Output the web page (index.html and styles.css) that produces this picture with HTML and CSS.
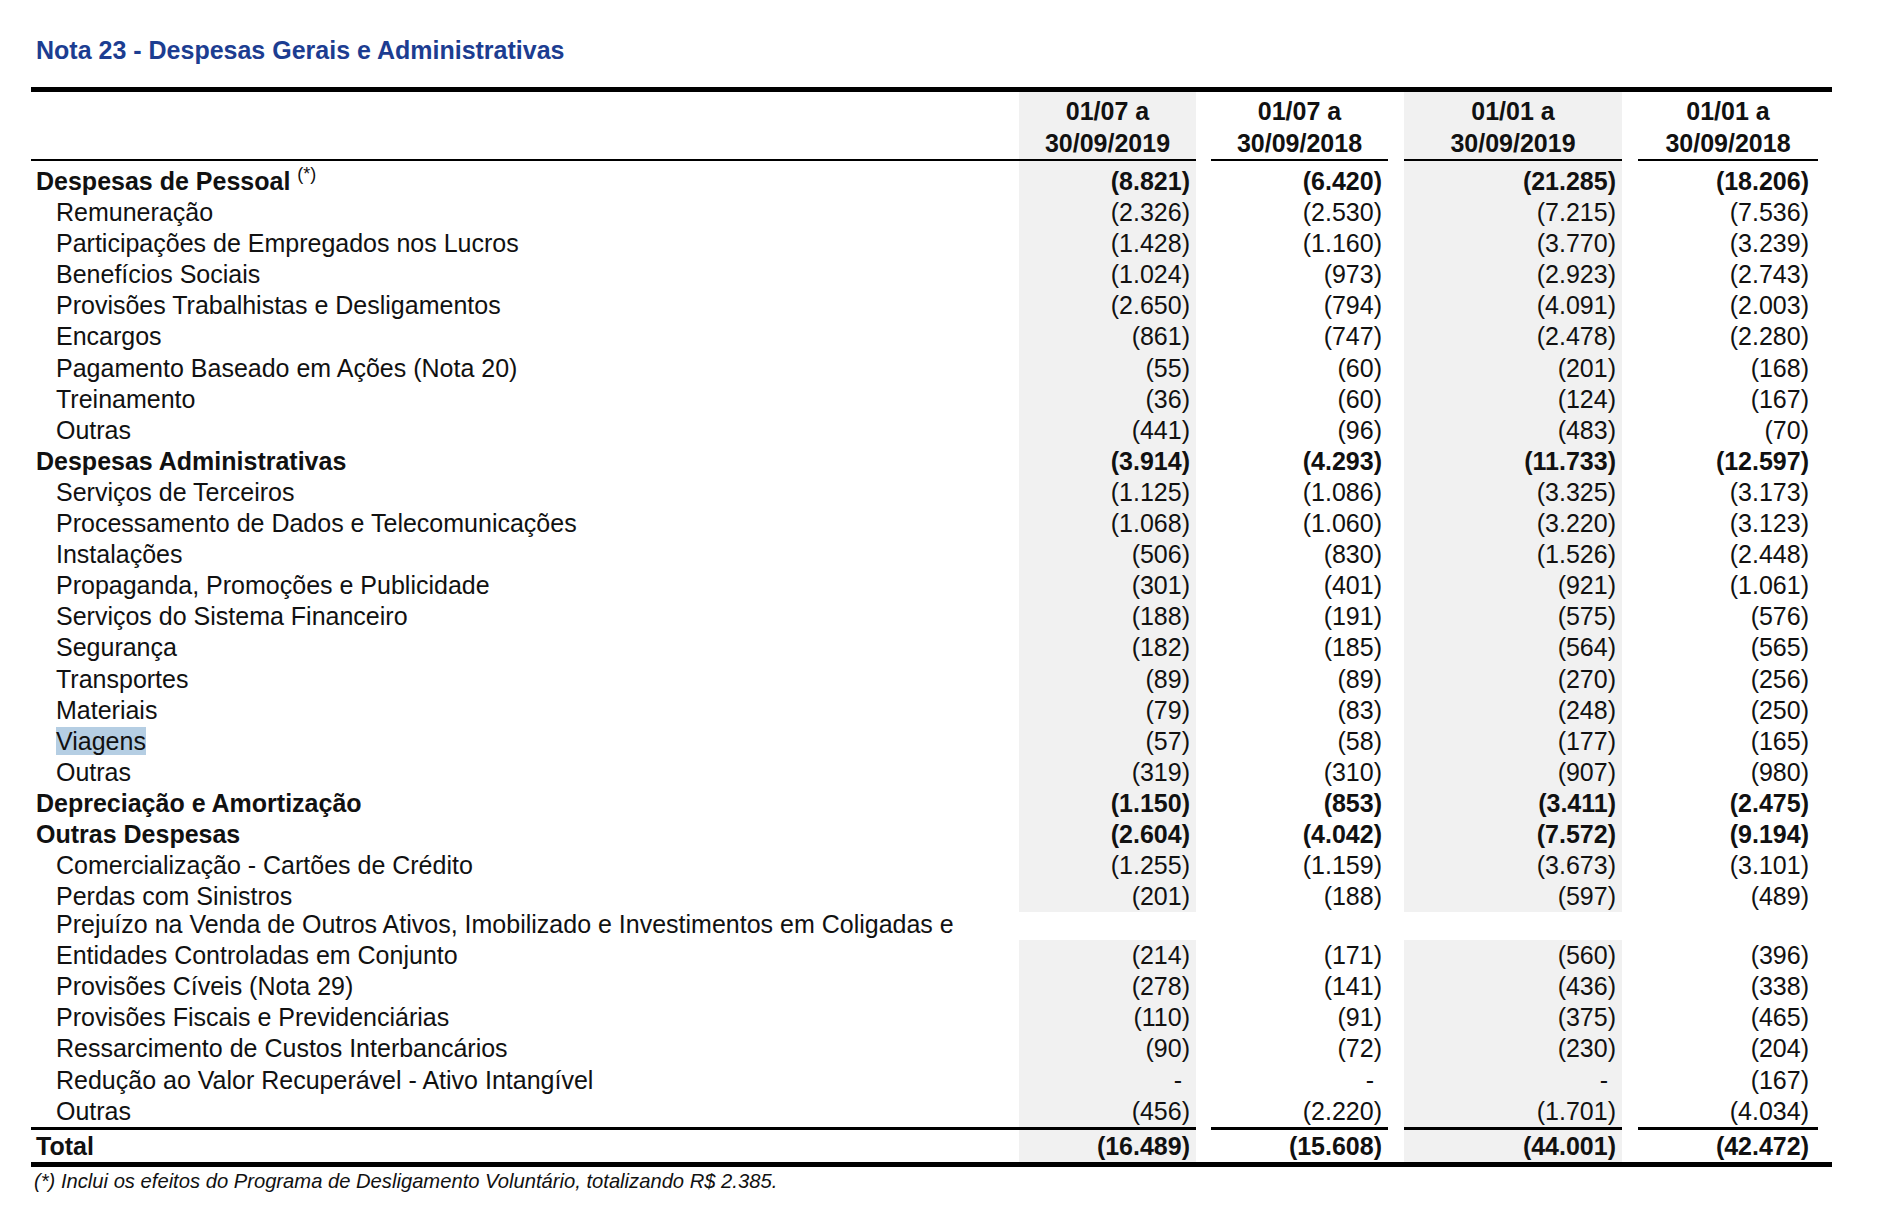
FILE: index.html
```html
<!DOCTYPE html>
<html lang="pt-BR">
<head>
<meta charset="utf-8">
<title>Nota 23 - Despesas Gerais e Administrativas</title>
<link rel="stylesheet" href="styles.css">
</head>
<body>
<div class="page">
  <h1 class="title">Nota 23 - Despesas Gerais e Administrativas</h1>
  <div class="table">
    <div class="row head">
      <div class="lbl"></div>
      <div class="hc sh">01/07 a<br>30/09/2019</div>
      <div class="hc g15">01/07 a<br>30/09/2018</div>
      <div class="hc g16 sh">01/01 a<br>30/09/2019</div>
      <div class="hc g16">01/01 a<br>30/09/2018</div>
    </div>
    <div class="body">
      <div class="row b"><div class="lbl">Despesas de Pessoal <sup class="note">(*)</sup></div><div class="n sh">(8.821)</div><div class="n g15">(6.420)</div><div class="n g16 sh">(21.285)</div><div class="n g16 last">(18.206)</div></div>
      <div class="row"><div class="lbl sub">Remuneração</div><div class="n sh">(2.326)</div><div class="n g15">(2.530)</div><div class="n g16 sh">(7.215)</div><div class="n g16 last">(7.536)</div></div>
      <div class="row"><div class="lbl sub">Participações de Empregados nos Lucros</div><div class="n sh">(1.428)</div><div class="n g15">(1.160)</div><div class="n g16 sh">(3.770)</div><div class="n g16 last">(3.239)</div></div>
      <div class="row"><div class="lbl sub">Benefícios Sociais</div><div class="n sh">(1.024)</div><div class="n g15">(973)</div><div class="n g16 sh">(2.923)</div><div class="n g16 last">(2.743)</div></div>
      <div class="row"><div class="lbl sub">Provisões Trabalhistas e Desligamentos</div><div class="n sh">(2.650)</div><div class="n g15">(794)</div><div class="n g16 sh">(4.091)</div><div class="n g16 last">(2.003)</div></div>
      <div class="row"><div class="lbl sub">Encargos</div><div class="n sh">(861)</div><div class="n g15">(747)</div><div class="n g16 sh">(2.478)</div><div class="n g16 last">(2.280)</div></div>
      <div class="row"><div class="lbl sub">Pagamento Baseado em Ações (Nota 20)</div><div class="n sh">(55)</div><div class="n g15">(60)</div><div class="n g16 sh">(201)</div><div class="n g16 last">(168)</div></div>
      <div class="row"><div class="lbl sub">Treinamento</div><div class="n sh">(36)</div><div class="n g15">(60)</div><div class="n g16 sh">(124)</div><div class="n g16 last">(167)</div></div>
      <div class="row"><div class="lbl sub">Outras</div><div class="n sh">(441)</div><div class="n g15">(96)</div><div class="n g16 sh">(483)</div><div class="n g16 last">(70)</div></div>
      <div class="row b"><div class="lbl">Despesas Administrativas</div><div class="n sh">(3.914)</div><div class="n g15">(4.293)</div><div class="n g16 sh">(11.733)</div><div class="n g16 last">(12.597)</div></div>
      <div class="row"><div class="lbl sub">Serviços de Terceiros</div><div class="n sh">(1.125)</div><div class="n g15">(1.086)</div><div class="n g16 sh">(3.325)</div><div class="n g16 last">(3.173)</div></div>
      <div class="row"><div class="lbl sub">Processamento de Dados e Telecomunicações</div><div class="n sh">(1.068)</div><div class="n g15">(1.060)</div><div class="n g16 sh">(3.220)</div><div class="n g16 last">(3.123)</div></div>
      <div class="row"><div class="lbl sub">Instalações</div><div class="n sh">(506)</div><div class="n g15">(830)</div><div class="n g16 sh">(1.526)</div><div class="n g16 last">(2.448)</div></div>
      <div class="row"><div class="lbl sub">Propaganda, Promoções e Publicidade</div><div class="n sh">(301)</div><div class="n g15">(401)</div><div class="n g16 sh">(921)</div><div class="n g16 last">(1.061)</div></div>
      <div class="row"><div class="lbl sub">Serviços do Sistema Financeiro</div><div class="n sh">(188)</div><div class="n g15">(191)</div><div class="n g16 sh">(575)</div><div class="n g16 last">(576)</div></div>
      <div class="row"><div class="lbl sub">Segurança</div><div class="n sh">(182)</div><div class="n g15">(185)</div><div class="n g16 sh">(564)</div><div class="n g16 last">(565)</div></div>
      <div class="row"><div class="lbl sub">Transportes</div><div class="n sh">(89)</div><div class="n g15">(89)</div><div class="n g16 sh">(270)</div><div class="n g16 last">(256)</div></div>
      <div class="row"><div class="lbl sub">Materiais</div><div class="n sh">(79)</div><div class="n g15">(83)</div><div class="n g16 sh">(248)</div><div class="n g16 last">(250)</div></div>
      <div class="row"><div class="lbl sub"><span class="selected">Viagens</span></div><div class="n sh">(57)</div><div class="n g15">(58)</div><div class="n g16 sh">(177)</div><div class="n g16 last">(165)</div></div>
      <div class="row"><div class="lbl sub">Outras</div><div class="n sh">(319)</div><div class="n g15">(310)</div><div class="n g16 sh">(907)</div><div class="n g16 last">(980)</div></div>
      <div class="row b"><div class="lbl">Depreciação e Amortização</div><div class="n sh">(1.150)</div><div class="n g15">(853)</div><div class="n g16 sh">(3.411)</div><div class="n g16 last">(2.475)</div></div>
      <div class="row b"><div class="lbl">Outras Despesas</div><div class="n sh">(2.604)</div><div class="n g15">(4.042)</div><div class="n g16 sh">(7.572)</div><div class="n g16 last">(9.194)</div></div>
      <div class="row"><div class="lbl sub">Comercialização - Cartões de Crédito</div><div class="n sh">(1.255)</div><div class="n g15">(1.159)</div><div class="n g16 sh">(3.673)</div><div class="n g16 last">(3.101)</div></div>
      <div class="row"><div class="lbl sub">Perdas com Sinistros</div><div class="n sh">(201)</div><div class="n g15">(188)</div><div class="n g16 sh">(597)</div><div class="n g16 last">(489)</div></div>
      <div class="row two"><div class="lbl sub"><span class="l1">Prejuízo na Venda de Outros Ativos, Imobilizado e Investimentos em Coligadas e</span><span class="l2">Entidades Controladas em Conjunto</span></div><div class="n sh">(214)</div><div class="n g15">(171)</div><div class="n g16 sh">(560)</div><div class="n g16 last">(396)</div></div>
      <div class="row"><div class="lbl sub">Provisões Cíveis (Nota 29)</div><div class="n sh">(278)</div><div class="n g15">(141)</div><div class="n g16 sh">(436)</div><div class="n g16 last">(338)</div></div>
      <div class="row"><div class="lbl sub">Provisões Fiscais e Previdenciárias</div><div class="n sh">(110)</div><div class="n g15">(91)</div><div class="n g16 sh">(375)</div><div class="n g16 last">(465)</div></div>
      <div class="row"><div class="lbl sub">Ressarcimento de Custos Interbancários</div><div class="n sh">(90)</div><div class="n g15">(72)</div><div class="n g16 sh">(230)</div><div class="n g16 last">(204)</div></div>
      <div class="row"><div class="lbl sub">Redução ao Valor Recuperável - Ativo Intangível</div><div class="n sh"><span class="dash">-</span></div><div class="n g15"><span class="dash">-</span></div><div class="n g16 sh"><span class="dash">-</span></div><div class="n g16 last">(167)</div></div>
      <div class="row end"><div class="lbl sub">Outras</div><div class="n sh">(456)</div><div class="n g15">(2.220)</div><div class="n g16 sh">(1.701)</div><div class="n g16 last">(4.034)</div></div>
      <div class="row b total"><div class="lbl">Total</div><div class="n sh">(16.489)</div><div class="n g15">(15.608)</div><div class="n g16 sh">(44.001)</div><div class="n g16 last">(42.472)</div></div>
    </div>
  </div>
  <p class="footnote">(*) Inclui os efeitos do Programa de Desligamento Voluntário, totalizando R$ 2.385.</p>
</div>
</body>
</html>
```

FILE: styles.css
```css
* { box-sizing: border-box; }

html, body {
  margin: 0;
  padding: 0;
  background: #ffffff;
}

body {
  font-family: "Liberation Sans", Arial, Helvetica, sans-serif;
  color: #111111;
}

.page {
  padding: 35px 0 0 31px;
  width: 1832px;
}

.title {
  margin: 0 0 22px 5px;
  font-size: 25px;
  line-height: 30px;
  font-weight: bold;
  color: #1c3d91;
}

.table {
  width: 1801px;
  border-top: 5px solid #000;
  border-bottom: 5px solid #000;
  font-size: 25px;
}

.row {
  display: grid;
  grid-template-columns: 988px 177px 192px 234px 196px;
  line-height: 31.1px;
}

.sh { background: #f1f1f1; }
.g15 { margin-left: 15px; }
.g16 { margin-left: 16px; }

.head {
  font-weight: bold;
}

.head > div {
  padding-top: 3px;
  border-bottom: 2px solid #000;
  line-height: 32px;
}

.hc { text-align: center; }

.body > .row:first-child > div { padding-top: 5px; }

.lbl { padding-left: 5px; white-space: nowrap; }
.lbl.sub { padding-left: 25px; }

.n {
  text-align: right;
  padding-right: 6px;
}
.n.last { padding-right: 9px; }

.b { font-weight: bold; }

.note {
  font-size: 18px;
  font-weight: normal;
  vertical-align: 0;
  position: relative;
  top: -10px;
  line-height: 0;
}

.selected { background: #b5cee3; }

.dash { padding-right: 8px; }

.two { align-items: end; }
.two .l1 { display: block; line-height: 25px; }
.two .l2 { display: block; line-height: 31px; margin-top: 3px; }

.end > div { border-bottom: 3px solid #000; }

.total > div {
  padding-top: 1px;
  line-height: 31px;
}

.footnote {
  margin: 2px 0 0 3px;
  font-size: 20.2px;
  line-height: 24px;
  font-style: italic;
  color: #111111;
}
```
